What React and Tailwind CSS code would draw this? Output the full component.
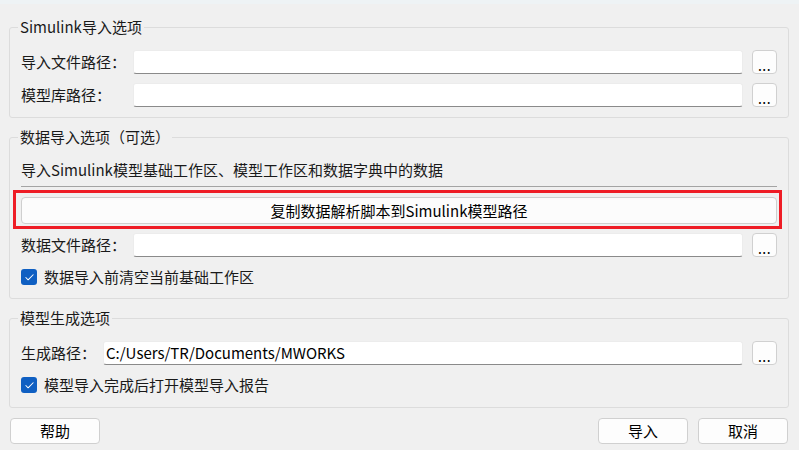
import { Check } from "lucide-react";

const font = { fontFamily: '"Noto Sans CJK SC", "Noto Sans", sans-serif' };

function Group({ title, children, className = "" }) {
    return (
        <fieldset className={`w-[780px] border border-[#dcdcdc] rounded-[3px] px-[11px] ${className}`}>
            <legend className="ml-[-3px] px-[2px] text-[15px] leading-[20px] text-[#1a1a1a]">
                {title}
            </legend>
            {children}
        </fieldset>
    );
}

function Browse() {
    return (
        <button className="w-[25px] h-[24px] ml-[9px] bg-[#fdfdfd] border border-[#d0d0d0] rounded-[4px] text-[14px] text-black flex items-end justify-center pb-[3px]">
            <span className="leading-[10px] tracking-[0.5px]">...</span>
        </button>
    );
}

function PathRow({ label, labelWidth = "w-[112px]", value = "", className = "" }) {
    return (
        <div className={`flex items-center h-[24px] ${className}`}>
            <span className={`${labelWidth} text-[15px] leading-[20px] shrink-0`}>{label}</span>
            <div className="flex-1 h-[24px] bg-white border border-[#ececec] border-b-[#8a8a8a] rounded-[3px] px-[2px] text-[15px] leading-[22px] text-black">
                {value}
            </div>
            <Browse />
        </div>
    );
}

function CheckRow({ label, className = "" }) {
    return (
        <div className={`flex items-center h-[20px] ${className}`}>
            <span className="w-[16px] h-[16px] rounded-[3px] bg-[#0f5fc2] flex items-center justify-center">
                <Check size={11} strokeWidth={2.2} color="white" />
            </span>
            <span className="ml-[7px] text-[15px] leading-[20px]">{label}</span>
        </div>
    );
}

function DialogButton({ children, className = "" }) {
    return (
        <button className={`w-[90px] h-[26px] bg-[#fdfdfd] border border-[#d0d0d0] rounded-[4px] text-[15px] leading-[24px] text-black ${className}`}>
            {children}
        </button>
    );
}

export default function App() {
    return (
        <div className="w-[799px] h-[450px] bg-[#f0f0f0] text-[#1a1a1a] overflow-hidden" style={font}>
            <div className="h-[4px] bg-[#eef3f5]" />

            <div className="pl-[9px] pt-[13px]">
                <Group title="Simulink导入选项" className="pb-[10px]">
                    <div className="pt-[13px]">
                        <PathRow label="导入文件路径：" />
                        <PathRow label="模型库路径：" className="mt-[9px]" />
                    </div>
                </Group>

                <Group title="数据导入选项（可选）" className="mt-[9px] pb-[11px]">
                    <div className="pt-[13px]">
                        <div className="text-[15px] leading-[20px]">
                            导入Simulink模型基础工作区、模型工作区和数据字典中的数据
                        </div>
                        <div className="mt-[6px] border-b border-[#a4a4a4]" />

                        <div className="relative mt-[10px]">
                            <button className="w-full h-[27px] bg-[#fcfcfc] border border-[#cfcfcf] rounded-[4px] text-[15px] leading-[25px] text-black">
                                复制数据解析脚本到Simulink模型路径
                            </button>
                            {/* highlight frame drawn over the copy button */}
                            <div className="absolute left-[-8px] top-[-7px] w-[769px] h-[39px] border-[3px] border-[#ee1c25] pointer-events-none" />
                        </div>

                        <PathRow label="数据文件路径：" className="mt-[9px]" />
                        <CheckRow label="数据导入前清空当前基础工作区" className="mt-[10px]" />
                    </div>
                </Group>

                <Group title="模型生成选项" className="mt-[9px] pb-[12px]">
                    <div className="pt-[13px]">
                        <PathRow
                            label="生成路径："
                            labelWidth="w-[82px]"
                            value="C:/Users/TR/Documents/MWORKS"
                        />
                        <CheckRow label="模型导入完成后打开模型导入报告" className="mt-[10px]" />
                    </div>
                </Group>

                <div className="flex w-[780px] mt-[10px] pl-[1px]">
                    <DialogButton>帮助</DialogButton>
                    <div className="flex-1" />
                    <DialogButton>导入</DialogButton>
                    <DialogButton className="ml-[10px] mr-[1px]">取消</DialogButton>
                </div>
            </div>
        </div>
    );
}
